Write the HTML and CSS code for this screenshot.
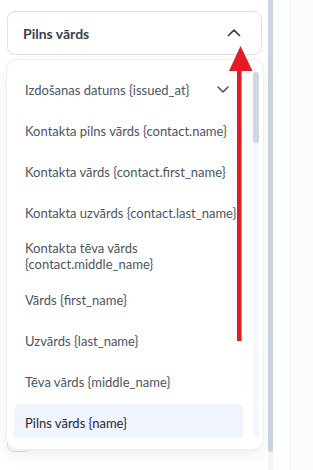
FILE: index.html
```html
<!DOCTYPE html>
<html lang="lv">
<head>
<meta charset="utf-8">
<link rel="stylesheet" href="styles.css">
</head>
<body>
<div class="app">
  <div class="left">
    <div class="field">
      <div class="select">
        <span class="select-label">Pilns vārds</span>
        <svg class="chev-up" width="14" height="8" viewBox="0 0 14 8"><polyline points="1.5,6.5 7,1.2 12.5,6.5" fill="none" stroke="#374151" stroke-width="1.7" stroke-linecap="round" stroke-linejoin="round"/></svg>
      </div>
      <div class="dropdown">
        <div class="viewport">
          <ul class="list">
            <li class="item item-group"><span>Izdošanas datums {issued_at}</span><svg class="chev-down" width="12" height="7" viewBox="0 0 12 7"><polyline points="1,1 6,6 11,1" fill="none" stroke="#4b5563" stroke-width="1.6" stroke-linecap="round" stroke-linejoin="round"/></svg></li>
            <li class="item">Kontakta pilns vārds {contact.name}</li>
            <li class="item">Kontakta vārds {contact.first_name}</li>
            <li class="item">Kontakta uzvārds {contact.last_name}</li>
            <li class="item">Kontakta tēva vārds {contact.middle_name}</li>
            <li class="item">Vārds {first_name}</li>
            <li class="item">Uzvārds {last_name}</li>
            <li class="item">Tēva vārds {middle_name}</li>
            <li class="item item-active">Pilns vārds {name}</li>
          </ul>
        </div>
        <div class="track"><div class="thumb"></div></div>
      </div>
    </div>
    <div class="under-btn"></div>
  </div>
  <div class="scrollbar"><div class="scrollbar-thumb"></div></div>
  <div class="spacer"></div>
  <div class="right"></div>
</div>
<svg class="arrow" width="313" height="470" viewBox="0 0 313 470">
  <rect x="237" y="68" width="4.6" height="273" fill="#e31b23"/>
  <polygon points="240.5,46 229,71 252.5,71" fill="#e31b23"/>
</svg>
</body>
</html>
```
FILE: styles.css
```css
* { box-sizing: border-box; }
html, body { margin: 0; padding: 0; background: #ffffff; }
body {
  width: 313px;
  height: 470px;
  overflow: hidden;
  position: relative;
  font-family: "Lato", "Noto Sans", sans-serif;
}
.app {
  display: flex;
  height: 470px;
}
.left {
  width: 268px;
  flex: none;
  padding: 11px 6px 0 7px;
}
.field {
  position: relative;
}
.select {
  height: 44px;
  border: 1px solid #dfe1e7;
  border-radius: 8px;
  background: #fff;
  display: flex;
  align-items: center;
  justify-content: space-between;
  padding: 0 20px 0 15px;
}
.select-label {
  font-size: 14px;
  font-weight: 700;
  color: #374151;
}
.chev-up { display: block; }
.dropdown {
  position: absolute;
  top: 49px;
  left: 0;
  width: 256px;
  height: 389px;
  background: #fff;
  border-radius: 10px;
  box-shadow: 0 0 0 1px rgba(230,232,238,0.5), 0 6px 16px rgba(30,41,59,0.08);
  display: flex;
  padding: 11px 4px 11px 7px;
  z-index: 2;
}
.viewport {
  width: 229px;
  height: 367px;
  overflow: hidden;
  margin-right: 10px;
}
.list {
  list-style: none;
  margin: 0;
  padding: 0;
  display: flex;
  flex-direction: column;
  gap: 4px;
}
.item {
  min-height: 37px;
  padding: 5px 2px 5px 11px;
  display: flex;
  align-items: center;
  font-size: 13px;
  line-height: 16px;
  color: #4b5563;
  border-radius: 6px;
  white-space: normal;
}
.item-group {
  justify-content: space-between;
  padding-right: 14px;
}
.item-active {
  background: #eff4fd;
  color: #1f2937;
  border-radius: 6px 6px 0 0;
}
.track {
  width: 6px;
  height: 367px;
  background: #f5f8fc;
  border-radius: 3px;
  position: relative;
}
.thumb {
  position: absolute;
  top: 1px;
  left: 0;
  width: 6px;
  height: 71px;
  background: #cfd7e1;
  border-radius: 3px;
}
.under-btn {
  margin-top: 375px;
  width: 25px;
  height: 22px;
  border: 1px solid #d8dce3;
  border-radius: 7px;
}
.scrollbar {
  width: 5px;
  flex: none;
  background: #f1f5f9;
}
.scrollbar-thumb {
  height: 452px;
  background: #cbd5e1;
  border-radius: 0 0 3px 3px;
}
.spacer {
  width: 17px;
  flex: none;
}
.right {
  flex: 1;
  border-left: 1px solid #efefef;
  background: #fcfcfc;
}
.arrow {
  position: absolute;
  left: 0;
  top: 0;
  pointer-events: none;
  z-index: 5;
}
```
